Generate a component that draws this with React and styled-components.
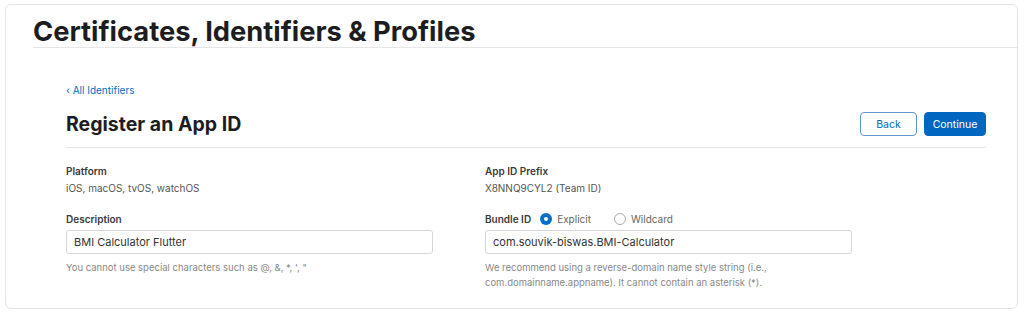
import styled, { createGlobalStyle } from "styled-components";

const GlobalStyle = createGlobalStyle`
  body {
    margin: 0;
    background: #ffffff;
    font-family: Inter, "Noto Sans", "Liberation Sans", sans-serif;
    color: #1d1d1f;
  }
`;

const Card = styled.div`
  box-sizing: border-box;
  margin: 4px 0 0 5px;
  width: 1013px;
  height: 305px;
  border: 1px solid #e3e3e3;
  border-radius: 6px;
  padding-left: 27px;
`;

const Header = styled.header`
  border-bottom: 1px solid #e6e6e6;
  height: 43px;
  box-sizing: border-box;
`;

const Title = styled.h1`
  margin: 0;
  padding-top: 11px;
  font-size: 27.3px;
  line-height: 32px;
  font-weight: 700;
  color: #1d1d1f;
`;

const Main = styled.main`
  padding: 35px 31px 0 33px;
`;

const BackLink = styled.a`
  display: block;
  font-size: 10px;
  line-height: 14px;
  color: #0070c9;
  text-decoration: none;
`;

const TopRow = styled.div`
  display: flex;
  align-items: center;
  justify-content: space-between;
  padding: 15px 0 11px;
  border-bottom: 1px solid #e6e6e6;
`;

const PageTitle = styled.h2`
  margin: 0;
  font-size: 19.5px;
  line-height: 24px;
  font-weight: 700;
  color: #1d1d1f;
`;

const Actions = styled.div`
  display: flex;
  gap: 7px;
`;

const Button = styled.button`
  box-sizing: border-box;
  height: 24px;
  width: ${(p) => (p.primary ? "62px" : "57px")};
  padding: 0;
  border-radius: 4px;
  font-family: inherit;
  font-size: 10.5px;
  border: 1px solid ${(p) => (p.primary ? "#0067c0" : "#5c97cc")};
  background: ${(p) => (p.primary ? "#0067c0" : "#ffffff")};
  color: ${(p) => (p.primary ? "#ffffff" : "#0067c0")};
`;

const Grid = styled.div`
  display: grid;
  grid-template-columns: 419px 1fr;
  padding-top: 16px;
`;

const Field = styled.div`
  margin-bottom: 17px;
`;

const Label = styled.div`
  display: flex;
  align-items: center;
  gap: 7px;
  height: 14px;
  font-size: 10px;
  line-height: 14px;
  font-weight: 600;
  color: #3a3a3a;
  margin-bottom: ${(p) => (p.tight ? "4px" : "3px")};
`;

const Value = styled.div`
  font-size: 10px;
  line-height: 14px;
  color: #555555;
`;

const Input = styled.div`
  box-sizing: border-box;
  width: 367px;
  height: 24px;
  border: 1px solid #d6d6d6;
  border-radius: 3px;
  padding: 0 7px;
  display: flex;
  align-items: center;
  font-size: 11px;
  color: #333333;
`;

const Help = styled.p`
  margin: 6px 0 0;
  font-size: 9.5px;
  line-height: 15px;
  color: #888888;
  max-width: 360px;
`;

const Radio = styled.span`
  display: inline-flex;
  align-items: center;
  gap: 5px;
  font-weight: 400;
  color: #666666;
  margin-left: ${(p) => (p.wide ? "16px" : "2px")};
`;

const Dot = styled.span`
  box-sizing: border-box;
  width: 12px;
  height: 12px;
  border-radius: 50%;
  background: ${(p) => (p.checked ? "#0070c9" : "#ffffff")};
  border: ${(p) => (p.checked ? "none" : "1px solid #a8a8a8")};
  display: inline-flex;
  align-items: center;
  justify-content: center;
  &::after {
    content: "";
    display: ${(p) => (p.checked ? "block" : "none")};
    width: 4px;
    height: 4px;
    border-radius: 50%;
    background: #ffffff;
  }
`;

export default function App() {
  return (
    <>
      <GlobalStyle />
      <Card>
        <Header>
          <Title>Certificates, Identifiers &amp; Profiles</Title>
        </Header>
        <Main>
          <BackLink href="#">‹ All Identifiers</BackLink>
          <TopRow>
            <PageTitle>Register an App ID</PageTitle>
            <Actions>
              <Button>Back</Button>
              <Button primary>Continue</Button>
            </Actions>
          </TopRow>
          <Grid>
            <div>
              <Field>
                <Label>Platform</Label>
                <Value>iOS, macOS, tvOS, watchOS</Value>
              </Field>
              <Field>
                <Label tight>Description</Label>
                <Input>BMI Calculator Flutter</Input>
                <Help>You cannot use special characters such as @, &amp;, *, ', "</Help>
              </Field>
            </div>
            <div>
              <Field>
                <Label>App ID Prefix</Label>
                <Value>X8NNQ9CYL2 (Team ID)</Value>
              </Field>
              <Field>
                <Label tight>
                  Bundle ID
                  <Radio>
                    <Dot checked />
                    Explicit
                  </Radio>
                  <Radio wide>
                    <Dot />
                    Wildcard
                  </Radio>
                </Label>
                <Input>com.souvik-biswas.BMI-Calculator</Input>
                <Help>
                  We recommend using a reverse-domain name style string (i.e.,
                  com.domainname.appname). It cannot contain an asterisk (*).
                </Help>
              </Field>
            </div>
          </Grid>
        </Main>
      </Card>
    </>
  );
}
